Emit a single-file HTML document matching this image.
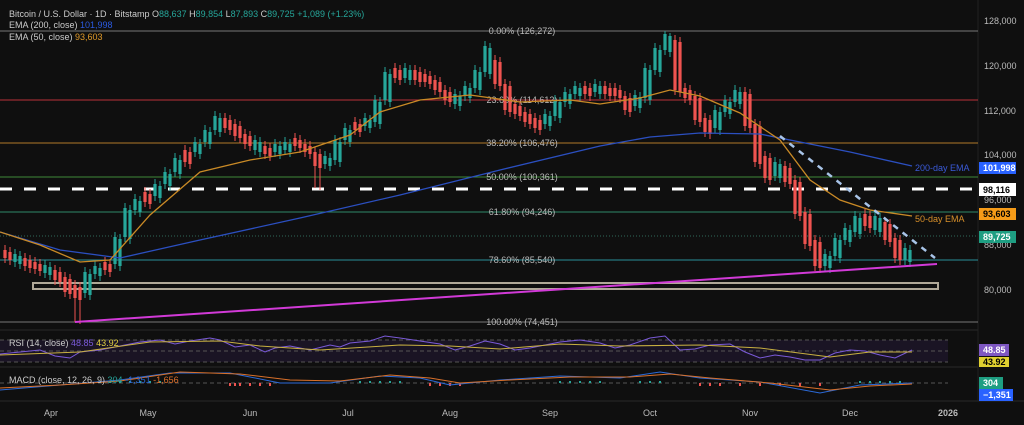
<!DOCTYPE html>
<html><head><meta charset="utf-8"><style>
html,body{margin:0;padding:0;background:#0f0f0f;width:1024px;height:425px;overflow:hidden;font-family:"Liberation Sans",sans-serif}
svg{position:absolute;left:0;top:0}
</style></head><body>
<svg width="1024" height="425" viewBox="0 0 1024 425" font-family="Liberation Sans, sans-serif">
<rect x="0" y="0" width="1024" height="425" fill="#0f0f0f"/>
<rect x="0" y="340" width="948" height="22" fill="#1a1424"/>
<line x1="0" y1="330" x2="978" y2="330" stroke="#2a2a2a"/>
<line x1="0" y1="367" x2="978" y2="367" stroke="#2a2a2a"/>
<line x1="0" y1="401" x2="1024" y2="401" stroke="#2a2a2a"/>
<line x1="978" y1="0" x2="978" y2="401" stroke="#222"/>
<g stroke="#555" stroke-dasharray="4 3" stroke-width="1">
<line x1="0" y1="340" x2="948" y2="340"/><line x1="0" y1="351" x2="948" y2="351"/><line x1="0" y1="362" x2="948" y2="362"/>
<line x1="0" y1="383" x2="948" y2="383"/>
</g>
<line x1="0" y1="31" x2="978" y2="31" stroke="#777"/>
<line x1="0" y1="100" x2="978" y2="100" stroke="#b8323a"/>
<line x1="0" y1="143" x2="978" y2="143" stroke="#b07a2a"/>
<line x1="0" y1="177" x2="978" y2="177" stroke="#3f8a3a"/>
<line x1="0" y1="212" x2="978" y2="212" stroke="#2f8a6a"/>
<line x1="0" y1="260" x2="978" y2="260" stroke="#2a8f9a"/>
<line x1="0" y1="322" x2="978" y2="322" stroke="#777"/>
<line x1="0" y1="236" x2="978" y2="236" stroke="#2f6a5a" stroke-dasharray="1 2"/>
<g font-size="9" fill="#bbb" text-anchor="middle">
<text x="522" y="34">0.00% (126,272)</text>
<text x="522" y="103">23.60% (114,612)</text>
<text x="522" y="146">38.20% (106,476)</text>
<text x="522" y="180">50.00% (100,361)</text>
<text x="522" y="215">61.80% (94,246)</text>
<text x="522" y="263">78.60% (85,540)</text>
<text x="522" y="325">100.00% (74,451)</text>
</g>
<line x1="0" y1="189" x2="978" y2="189" stroke="#fff" stroke-width="3" stroke-dasharray="12 12"/>
<rect x="33" y="283" width="905" height="6" fill="none" stroke="#b0a898" stroke-width="2"/>
<g id="cd">
<path stroke="#26a69a" stroke-width="1" fill="none" d="M15,249V267 M45,260V278 M85,267V298 M95,261V279 M115,232V269 M125,203V242 M135,194V215 M155,179V201 M165,167V189 M175,153V177 M195,137V157 M205,125V147 M215,111V135 M255,135V155 M275,139V157 M285,137V155 M325,151V169 M335,135V165 M345,123V145 M365,113V131 M375,95V127 M385,67V105 M405,63V83 M455,89V109 M465,81V101 M475,65V93 M485,41V77 M545,109V129 M555,95V121 M565,87V107 M575,81V99 M595,79V97 M635,90V111 M645,63V103 M655,43V75 M665,31V55 M715,105V133 M725,95V117 M735,85V107 M775,157V181 M825,249V271 M835,233V261 M845,223V245 M855,211V237 M875,211V235 M905,243V265"/>
<path stroke="#26a69a" stroke-width="3.2" fill="none" d="M15,254V262 M45,265V273 M85,272V293 M95,266V274 M115,237V264 M125,208V237 M135,199V210 M155,184V196 M165,172V184 M175,158V172 M195,142V152 M205,130V142 M215,116V130 M255,140V150 M275,144V152 M285,142V150 M325,156V164 M335,140V160 M345,128V140 M365,118V126 M375,100V122 M385,72V100 M405,68V78 M455,94V104 M465,86V96 M475,70V88 M485,46V72 M545,114V124 M555,100V116 M565,92V102 M575,86V94 M595,84V92 M635,95V106 M645,68V98 M655,48V70 M665,34V50 M715,110V128 M725,100V112 M735,90V102 M775,162V176 M825,254V266 M835,238V256 M845,228V240 M855,216V232 M875,216V230 M905,248V260"/>
<path stroke="#ef5350" stroke-width="1" fill="none" d="M5,245V263 M25,253V271 M35,257V274 M55,265V285 M65,272V297 M75,280V322 M105,257V275 M145,187V207 M185,145V167 M225,113V133 M235,119V141 M245,129V149 M265,141V159 M295,133V151 M305,139V157 M315,147V188 M355,117V135 M395,63V83 M415,65V85 M425,69V87 M435,75V95 M445,85V105 M495,55V89 M505,79V115 M515,99V119 M525,107V127 M535,113V133 M585,81V99 M605,81V99 M615,83V101 M625,91V115 M675,35V95 M685,83V103 M695,91V125 M705,113V137 M745,87V131 M755,119V167 M765,151V183 M785,161V187 M795,175V219 M805,207V249 M815,235V271 M865,209V231 M885,217V245 M895,233V263"/>
<path stroke="#ef5350" stroke-width="3.2" fill="none" d="M5,250V258 M25,258V266 M35,262V269 M55,270V280 M65,277V292 M75,285V298 M105,262V270 M145,192V202 M185,150V162 M225,118V128 M235,124V136 M245,134V144 M265,146V154 M295,138V146 M305,144V152 M315,152V166 M355,122V130 M395,68V78 M415,70V80 M425,74V82 M435,80V90 M445,90V100 M495,60V84 M505,84V110 M515,104V114 M525,112V122 M535,118V128 M585,86V94 M605,86V94 M615,88V96 M625,96V110 M675,40V90 M685,88V98 M695,96V120 M705,118V132 M745,92V126 M755,124V162 M765,156V178 M785,166V182 M795,180V214 M805,212V244 M815,240V266 M865,214V226 M885,222V240 M895,238V258"/>
</g>
<use href="#cd" transform="translate(5,2)"/>
<polyline fill="none" stroke="#2b4fc0" stroke-width="1.3" points="0,232 60,250 120,258 200,240 300,218 400,195 500,170 600,146 650,137 700,133 760,134 800,142 850,152 912,166"/>
<polyline fill="none" stroke="#c98a26" stroke-width="1.3" points="0,232 40,245 80,262 110,260 150,215 200,172 250,160 300,152 350,135 380,112 420,100 470,95 520,102 570,100 600,104 640,98 670,90 700,96 740,113 780,140 810,180 840,200 870,210 912,216"/>
<line x1="75" y1="322" x2="937" y2="264" stroke="#d23ad8" stroke-width="2"/>
<line x1="780" y1="136" x2="935" y2="258" stroke="#a8c4e8" stroke-width="2.5" stroke-dasharray="6 6"/>
<text x="915" y="171" font-size="9" fill="#3a5ad8">200-day EMA</text>
<text x="915" y="222" font-size="9" fill="#d8902a">50-day EMA</text>
<polyline fill="none" stroke="#7a5ad8" stroke-width="1" points="0,354 20,352 40,350 55,356 70,358 80,352 100,350 120,346 140,342 160,340 175,344 190,341 210,338 220,340 235,347 250,345 265,352 275,348 290,346 310,350 330,345 340,347 350,343 370,341 385,336 400,338 420,341 440,344 455,350 470,346 485,341 500,344 515,350 530,348 545,345 560,342 580,340 600,343 615,348 630,345 650,338 665,336 680,350 695,349 710,345 730,344 745,352 760,358 775,355 790,357 805,360 820,360 835,353 850,350 865,351 880,355 895,358 912,350"/>
<polyline fill="none" stroke="#c8b040" stroke-width="1" points="0,355 80,352 150,342 220,341 260,346 320,350 400,345 450,346 500,349 560,344 620,346 700,345 760,348 830,357 870,352 912,352"/>
<path stroke="#26a69a" stroke-width="2" fill="none" d="M100,383v-2 M110,383v-2 M120,383v-2 M130,383v-2 M140,383v-2 M150,383v-2 M160,383v-2 M360,383v-2 M370,383v-2 M380,383v-2 M390,383v-2 M400,383v-2 M560,383v-2 M570,383v-2 M580,383v-2 M590,383v-2 M600,383v-2 M640,383v-2 M650,383v-2 M660,383v-2 M860,383v-2 M870,383v-2 M880,383v-2 M890,383v-2 M900,383v-2"/>
<path stroke="#ef5350" stroke-width="2" fill="none" d="M230,383v3 M235,383v3 M240,383v3 M250,383v3 M260,383v3 M270,383v3 M430,383v3 M440,383v3 M450,383v3 M460,383v3 M700,383v3 M710,383v3 M720,383v3 M740,383v3 M760,383v3 M780,383v3 M800,383v3 M820,383v3"/>
<polyline fill="none" stroke="#2b6ad8" stroke-width="1" points="0,390 60,385 120,380 170,373 230,373 280,383 330,383 380,376 420,378 450,385 500,380 560,376 620,378 660,372 700,378 760,382 820,393 860,385 912,383"/>
<polyline fill="none" stroke="#d8702a" stroke-width="1" points="0,388 60,385 120,381 180,372 240,374 290,380 340,381 390,375 430,378 460,383 510,380 570,377 630,377 670,374 710,378 770,383 830,390 870,386 912,384"/>
<g font-size="9">
<text x="9" y="17" fill="#ccc">Bitcoin / U.S. Dollar · 1D · Bitstamp O<tspan fill="#26a69a">88,637</tspan> H<tspan fill="#26a69a">89,854</tspan> L<tspan fill="#26a69a">87,893</tspan> C<tspan fill="#26a69a">89,725</tspan> <tspan fill="#26a69a">+1,089 (+1.23%)</tspan></text>
<text x="9" y="28" fill="#ccc">EMA (200, close) <tspan fill="#2b5ae0">101,998</tspan></text>
<text x="9" y="40" fill="#ccc">EMA (50, close) <tspan fill="#e09a2a">93,603</tspan></text>
<text x="9" y="346" fill="#ccc">RSI (14, close) <tspan fill="#7a5ad8">48.85</tspan> <tspan fill="#e0d040">43.92</tspan></text>
<text x="9" y="383" fill="#ccc">MACD (close, 12, 26, 9) <tspan fill="#26a69a">304</tspan> <tspan fill="#2b6ad8">-1,351</tspan> <tspan fill="#e0702a">-1,656</tspan></text>
</g>
<g font-size="9" fill="#bbb">
<text x="984" y="24">128,000</text><text x="984" y="69">120,000</text><text x="984" y="114">112,000</text>
<text x="984" y="158">104,000</text><text x="984" y="203">96,000</text><text x="984" y="248">88,000</text><text x="984" y="293">80,000</text>
</g>
<g font-size="9" font-weight="bold">
<rect x="979" y="162" width="37" height="12" fill="#2962ff"/><text x="983" y="171" fill="#fff">101,998</text>
<rect x="979" y="183" width="37" height="13" fill="#fff"/><text x="983" y="193" fill="#000">98,116</text>
<rect x="979" y="208" width="37" height="12" fill="#f59b18"/><text x="983" y="217" fill="#000">93,603</text>
<rect x="979" y="231" width="37" height="12" fill="#1e9e82"/><text x="983" y="240" fill="#fff">89,725</text>
<rect x="979" y="344" width="30" height="12" fill="#7e57c2"/><text x="983" y="353" fill="#fff">48.85</text>
<rect x="979" y="357" width="30" height="10" fill="#e0d030"/><text x="983" y="365" fill="#000">43.92</text>
<rect x="979" y="377" width="24" height="12" fill="#1e9e82"/><text x="983" y="386" fill="#fff">304</text>
<rect x="979" y="389" width="34" height="12" fill="#2962ff"/><text x="983" y="398" fill="#fff">−1,351</text>
</g>
<g font-size="9" fill="#bbb" text-anchor="middle">
<text x="51" y="416">Apr</text><text x="148" y="416">May</text><text x="250" y="416">Jun</text><text x="348" y="416">Jul</text>
<text x="450" y="416">Aug</text><text x="550" y="416">Sep</text><text x="650" y="416">Oct</text><text x="750" y="416">Nov</text>
<text x="850" y="416">Dec</text><text x="948" y="416" font-weight="bold">2026</text>
</g>
</svg>
</body></html>
